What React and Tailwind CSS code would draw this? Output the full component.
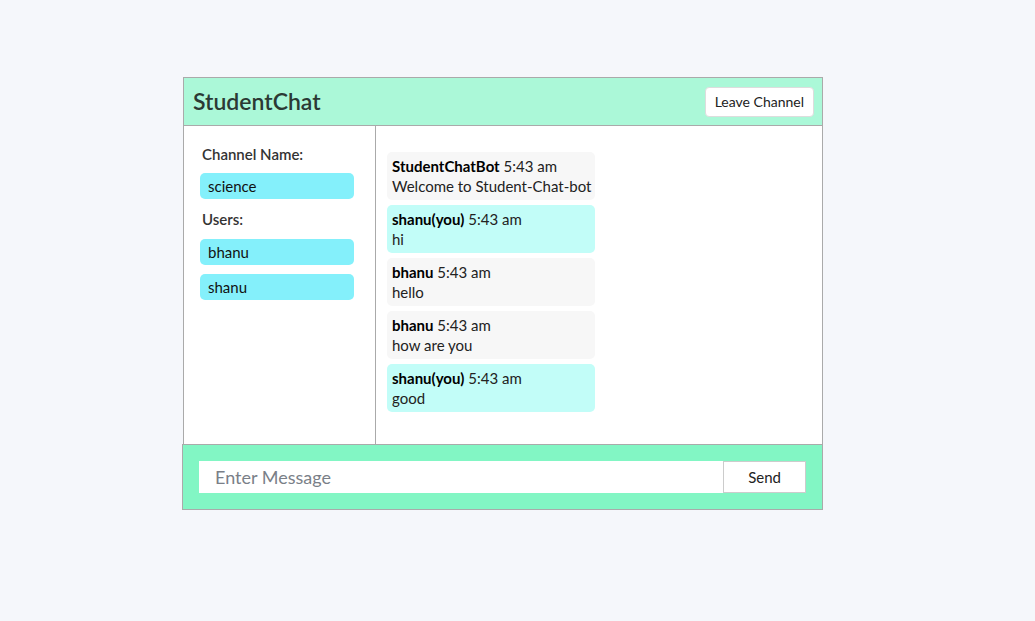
const messages = [
  { user: 'StudentChatBot', time: '5:43 am', text: 'Welcome to Student-Chat-bot', self: false },
  { user: 'shanu(you)', time: '5:43 am', text: 'hi', self: true },
  { user: 'bhanu', time: '5:43 am', text: 'hello', self: false },
  { user: 'bhanu', time: '5:43 am', text: 'how are you', self: false },
  { user: 'shanu(you)', time: '5:43 am', text: 'good', self: true },
]

const users = ['bhanu', 'shanu']

export default function App() {
  return (
    <div
      className="min-h-[621px] bg-[#f5f7fb] pt-[77px] pl-[182px]"
      style={{ fontFamily: '"Lato", "Noto Sans", sans-serif' }}
    >
      <div className="w-[641px]">
        {/* Top: header + body */}
        <div className="ml-px w-[640px] border-x border-t border-[#aaaaaa]">
          <header className="flex h-[48px] items-center justify-between border-b border-[#aaaaaa] bg-[#abf8d8] pl-[9px] pr-[8px]">
            <h1 className="text-[23px] font-semibold text-[#2b3a34]">StudentChat</h1>
            <button className="h-[30px] rounded-[4px] border border-[#dddddd] bg-white px-[9px] text-[14px] text-[#222]">
              Leave Channel
            </button>
          </header>

          <div className="flex h-[318px] bg-white">
            {/* Sidebar */}
            <aside className="w-[192px] border-r border-[#aaaaaa] px-4 pt-[18px]">
              <h3 className="ml-[2px] text-[15px] font-semibold leading-5 text-[#333]">Channel Name:</h3>
              <div className="mt-[9px] h-[26px] w-[154px] rounded-[5px] bg-[#84f0fb] px-2 text-[15px] leading-[26px] text-[#111]">
                science
              </div>
              <h3 className="ml-[2px] mt-[10px] text-[15px] font-semibold leading-5 text-[#333]">Users:</h3>
              <div className="mt-[10px] flex flex-col gap-[9px]">
                {users.map((u) => (
                  <div
                    key={u}
                    className="h-[26px] w-[154px] rounded-[5px] bg-[#84f0fb] px-2 text-[15px] leading-[26px] text-[#111]"
                  >
                    {u}
                  </div>
                ))}
              </div>
            </aside>

            {/* Messages */}
            <main className="flex flex-1 flex-col gap-[5px] pl-[11px] pt-[26px]">
              {messages.map((m, i) => (
                <div
                  key={i}
                  className={`w-[208px] whitespace-nowrap rounded-[5px] px-[5px] py-[4px] text-[15px] leading-5 text-[#222] ${
                    m.self ? 'bg-[#c2fdf8]' : 'bg-[#f7f7f7]'
                  }`}
                >
                  <div>
                    <span className="font-bold text-black">{m.user}</span> {m.time}
                  </div>
                  <div>{m.text}</div>
                </div>
              ))}
            </main>
          </div>
        </div>

        {/* Footer */}
        <footer className="flex h-[66px] items-start border border-[#aaaaaa] bg-[#82f6c4] px-4 pt-[16px]">
          <input
            type="text"
            placeholder="Enter Message"
            className="h-[32px] w-[525px] bg-white px-4 text-[18px] text-[#333] outline-none placeholder:text-[#7a7f88]"
          />
          <button className="h-[32px] w-[83px] border border-[#cccccc] bg-white text-[15px] text-[#222]">
            Send
          </button>
        </footer>
      </div>
    </div>
  )
}
